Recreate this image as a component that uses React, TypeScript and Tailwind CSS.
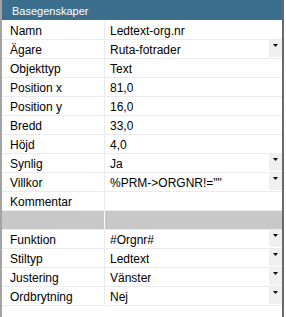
type Row = { name: string; value: string; dropdown?: boolean; separator?: boolean };

const rows: Row[] = [
  { name: 'Namn', value: 'Ledtext-org.nr' },
  { name: 'Ägare', value: 'Ruta-fotrader', dropdown: true },
  { name: 'Objekttyp', value: 'Text' },
  { name: 'Position x', value: '81,0' },
  { name: 'Position y', value: '16,0' },
  { name: 'Bredd', value: '33,0' },
  { name: 'Höjd', value: '4,0' },
  { name: 'Synlig', value: 'Ja', dropdown: true },
  { name: 'Villkor', value: '%PRM->ORGNR!=""', dropdown: true },
  { name: 'Kommentar', value: '' },
  { name: '', value: '', separator: true },
  { name: 'Funktion', value: '#Orgnr#', dropdown: true },
  { name: 'Stiltyp', value: 'Ledtext', dropdown: true },
  { name: 'Justering', value: 'Vänster', dropdown: true },
  { name: 'Ordbrytning', value: 'Nej', dropdown: true },
];

function DropButton() {
  return (
    <div className="flex h-[17px] w-[13px] shrink-0 justify-center bg-[#f0f0f0] pt-[4px]">
      <svg width="5" height="3" viewBox="0 0 5 3">
        <path d="M0 0h5L2.5 3z" fill="#000" />
      </svg>
    </div>
  );
}

export default function App() {
  return (
    <div
      className="h-[317px] w-[284px] border-l-2 border-r-2 border-l-[#a3a3a3] border-r-[#696969] bg-white text-black"
      style={{ fontFamily: '"Liberation Sans", Arial, sans-serif' }}
    >
      {/* rubrik */}
      <div className="h-[20px] bg-[#3c6e8d] pl-[10px] text-[11px] leading-[22px] text-white">
        Basegenskaper
      </div>
      <div className="pt-px">
        {rows.map((row, i) => (
          <div key={i} className="flex h-[19px] border-b border-[#ebebeb] text-[12px]">
            <div
              className={`h-[18px] w-[103px] shrink-0 border-r pl-[8px] leading-[20px] ${
                row.separator ? 'border-white bg-[#c8c8c8]' : 'border-[#ebebeb]'
              }`}
            >
              {row.name}
            </div>
            <div
              className={`flex h-[18px] min-w-0 flex-1 justify-between ${
                row.separator ? 'bg-[#c8c8c8]' : ''
              }`}
            >
              <span className="truncate pl-[5px] leading-[20px]">{row.value}</span>
              {row.dropdown && <DropButton />}
            </div>
          </div>
        ))}
      </div>
    </div>
  );
}
